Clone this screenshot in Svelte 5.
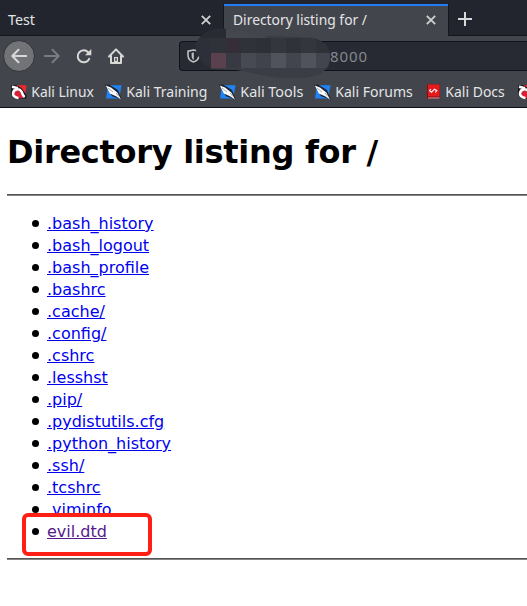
<script>
  const files = ['.bash_history', '.bash_logout', '.bash_profile', '.bashrc', '.cache/', '.config/', '.cshrc', '.lesshst', '.pip/', '.pydistutils.cfg', '.python_history', '.ssh/', '.tcshrc', '.viminfo', 'evil.dtd'];
  const bookmarks = [
    { name: 'Kali Linux', icon: 'kali', left: 11, text: 62.5 },
    { name: 'Kali Training', icon: 'knife', left: 105, text: 81 },
    { name: 'Kali Tools', icon: 'knife', left: 219, text: 63 },
    { name: 'Kali Forums', icon: 'knife', left: 314, text: 77.5 },
    { name: 'Kali Docs', icon: 'book', left: 427, text: 59.5 },
    { name: '', icon: 'kali', left: 518, text: 0 }
  ];
  const widthOf = (i) => (i < bookmarks.length - 1 ? bookmarks[i + 1].left - bookmarks[i].left : 16);
  const mosaic = [
    ['#30323a', '#352e39', '#30323a', '#2e3038', '#34363e', '#30323a', '#34363e', '#30323a'],
    ['#5b414d', '#383a43', '#474a52', '#40434b', '#50535b', '#42454d', '#50535b', '#42454d']
  ];
</script>

<div class="window">
  <div class="tabs">
    <div class="tab idle">
      <svg class="label" width="36" height="28"><text x="0" y="19" textLength="27" lengthAdjust="spacingAndGlyphs">Test</text></svg>
      <svg class="close" width="10" height="10" viewBox="0 0 10 10"><path d="M.8.8l8.4 8.4M9.2.8L.8 9.2" /></svg>
    </div>
    <div class="tab active">
      <svg class="label" width="160" height="28"><text x="0" y="19" textLength="134" lengthAdjust="spacingAndGlyphs">Directory listing for /</text></svg>
      <svg class="close" width="10" height="10" viewBox="0 0 10 10"><path d="M.8.8l8.4 8.4M9.2.8L.8 9.2" /></svg>
    </div>
    <svg class="plus" width="14" height="14" viewBox="0 0 14 14"><path d="M7 0v14M0 7h14" /></svg>
  </div>

  <div class="toolbar">
    <div class="back">
      <svg width="16" height="16" viewBox="0 0 16 16"><path d="M15.3 8H1.5M7.5 1.8L1.3 8l6.2 6.2" /></svg>
    </div>
    <svg class="forward" width="16" height="16" viewBox="0 0 16 16"><path d="M.5 8h14M8.5 1.8L14.7 8l-6.2 6.2" /></svg>
    <svg class="reload" width="16" height="16" viewBox="0 0 16 16"><path d="M13.2 10.8A6 6 0 1 1 12.2 4.3" /><path class="fill" d="M15.3 1v6.3H9z" /></svg>
    <svg class="home" width="16" height="16" viewBox="0 0 16 16"><path d="M1 8.5L8 1.4l7 7.1M3 7.5V15h10V7.5" /><path class="fill" d="M6 15V9h4v6z" /><path class="hole" d="M8 10.7v1.6" /></svg>
    <div class="url">
      <svg class="shield" width="13" height="14" viewBox="0 0 13 14"><path d="M6.5 1L1 2.2V6c0 3.7 2.2 6 5.5 7 3.3-1 5.5-3.3 5.5-7V2.2z" /><path class="inner" d="M6.8 3.3L4.6 4V6c0 2.7.6 4 2.2 5z" /></svg>
      <span>8000</span>
      <svg class="smudge" width="136" height="54" viewBox="195 27 136 54">
        <defs><clipPath id="blob"><path d="M196 46C197 36 207 30 220 29C240 28 250 33 266 36L307 37C321 38 330 46 330 57C330 70 320 77 303 78L280 78C260 76 250 72 236 70L212 69C204 64 195 56 196 46Z" /></clipPath></defs>
        <g clip-path="url(#blob)">
          <rect x="195" y="27" width="136" height="54" fill="#3b3d45" />
          <rect x="195" y="27" width="31" height="11" fill="#292b33" />
          <rect x="226" y="27" width="40" height="11" fill="#45474f" />
          <rect x="195" y="38" width="16" height="30" fill="#2d3038" />
          {#each mosaic as row, r}
            {#each row as colour, c}
              <rect x={211 + c * 15} y={38 + r * 15} width="15" height="15" fill={colour} />
            {/each}
          {/each}
        </g>
      </svg>
    </div>
  </div>

  <div class="bookmarks">
    {#each bookmarks as b, i}
      <div class="bookmark" class:docs={b.icon === 'book'} style:width="{widthOf(i)}px">
        {#if b.icon === 'kali'}
          <svg width="16" height="16" viewBox="0 0 16 16"><path fill="#f0282e" d="M4 1.2H15.5L14 12.5 6 5z" /><path fill="#17171c" d="M0 1.5l5-.5 5.5 3L15.5 11v3.5L9 15 3 14 0 10z" /><path fill="#d81f35" d="M3 8l4-2 4 4 2 4-4 .5-5-2z" /><path fill="none" stroke="#fff" stroke-width="2.6" d="M1 2.7l6 1.6M7.5 14C3.5 13.8 1.5 11.3 2.2 8.5 3.2 4.8 8 4.3 10.2 7.2 11.8 9.2 11 11.3 13.7 13" /></svg>
        {:else if b.icon === 'knife'}
          <svg width="17" height="16" viewBox="0 0 17 16"><path fill="#1f83f5" d="M3 1.2h13.5L14.3 14.5H1z" /><path fill="#20232c" d="M0 .8L4 .5 13 6l3.8 9.5L7 12.2z" /><path fill="#f8fafb" d="M.8 1.5l5.2 2L12.3 8.5l3.7 7-5-3.3L4.8 9.4z" /><path fill="none" stroke="#7d8994" stroke-width=".7" d="M3 4l5 4M11 9l2.6 3.2" /></svg>
        {:else}
          <svg width="13" height="16" viewBox="0 0 13 16"><path fill="#96060b" d="M0 .5h12.5V15H0z" /><path fill="#e51a1d" d="M1 .5h11.5v12H1z" /><path fill="#b5bac2" d="M1 13.5h11.5v1H1z" /><path fill="none" stroke="#fff" stroke-width="1.1" d="M4 5L2.5 6.7l2 1.5 3-3 2.3 1.5L8.3 8.5" /></svg>
        {/if}
        {#if b.name}
          <svg class="label" width={b.text + 10} height="28"><text x="0.3" y="19" textLength={b.text} lengthAdjust="spacingAndGlyphs">{b.name}</text></svg>
        {/if}
      </div>
    {/each}
  </div>

  <main>
    <h1>Directory listing for /</h1>
    <hr />
    <ul>
      {#each files as file}
        <li class:chosen={file === 'evil.dtd'}><a href="#{file}">{file}</a></li>
      {/each}
    </ul>
    <hr />
  </main>
</div>

<style>
  :global(body) { margin: 0; background: #fff; overflow: hidden; }
  .window { width: 527px; height: 606px; overflow: hidden; background: #fff; font: 15px/20px "Noto Sans", sans-serif; color: #e4e5e7; }
  svg { display: block; flex: none; fill: none; }
  .tabs { height: 36px; background: #23252e; display: flex; box-sizing: border-box; border-bottom: 1px solid #15171d; }
  .tab { display: flex; align-items: center; justify-content: space-between; box-sizing: border-box; white-space: nowrap; }
  .idle { width: 223px; padding: 5px 12px 0 8px; }
  .active { width: 226px; height: 32px; margin-top: 4px; padding: 0 12px 0 9px; border: solid #15171d; border-width: 0 1px; background: #42454c; position: relative; }
  .active::before { content: ''; position: absolute; left: 0; right: 0; top: 0; height: 2px; background: #247cf3; }
  .close { stroke: #d0d1d1; stroke-width: 1.8; }
  .plus { margin: 12px 0 0 9px; stroke: #d8d8d7; stroke-width: 2; }
  .toolbar { height: 40px; background: #42454c; display: flex; align-items: center; }
  .toolbar > svg, .back svg { stroke: #d8d8d7; stroke-width: 2; stroke-linecap: round; stroke-linejoin: round; }
  .back { width: 32px; height: 32px; box-sizing: border-box; border: 1px solid #303238; border-radius: 50%; background: #727377; display: flex; align-items: center; justify-content: center; margin-left: 3px; }
  .toolbar .forward { margin-left: 9px; stroke: #797b80; }
  .reload { margin-left: 16px; }
  .home { margin-left: 16px; }
  .toolbar .fill { fill: #d8d8d7; stroke: none; }
  .home .hole { stroke: #42454c; stroke-width: 1.6; }
  .url { margin-left: 55px; flex: 1; height: 30px; box-sizing: border-box; border: 1px solid #101219; border-right: 0; border-radius: 4px 0 0 4px; background: #272a33; display: flex; align-items: center; position: relative; }
  .shield { margin-left: 7px; stroke: #c0c1c3; stroke-width: 1.6; }
  .shield .inner { fill: #c0c1c3; stroke: none; }
  .url span { margin-left: 130px; color: #85888e; font-size: 15px; letter-spacing: .9px; }
  .smudge { position: absolute; left: 15px; top: -15px; z-index: 1; }
  .bookmarks { height: 31px; background: #42454c; padding-left: 11px; display: flex; align-items: center; }
  .bookmark { display: flex; align-items: center; flex: none; gap: 4px; }
  .docs { gap: 5px; }
  .label { fill: #e4e5e7; overflow: visible; }
  main { border-top: 1px solid #0c0d11; font: 16px/22px "DejaVu Sans", sans-serif; color: #000; padding-left: 7px; }
  h1 { font-size: 32px; line-height: 38px; margin: 25px 0 23px; white-space: nowrap; letter-spacing: -.29px; }
  hr { height: 2px; border: 0; margin: 0; background: linear-gradient(#545454 50%, #858585 50%); }
  ul { margin: 17px 0 15px; padding-left: 40px; list-style: none; }
  li { height: 22px; display: flex; position: relative; }
  li::before { content: ''; width: 7px; height: 7px; border-radius: 50%; background: #000; margin: 7px 8px 0 -15px; }
  a { color: #0000ee; text-decoration: underline; }
  .chosen a { color: #551a8b; }
  .chosen::after { content: ''; position: absolute; left: -25.5px; top: -8.4px; width: 122px; height: 35.5px; border: 4px solid #ff2015; border-radius: 6px; }
</style>
